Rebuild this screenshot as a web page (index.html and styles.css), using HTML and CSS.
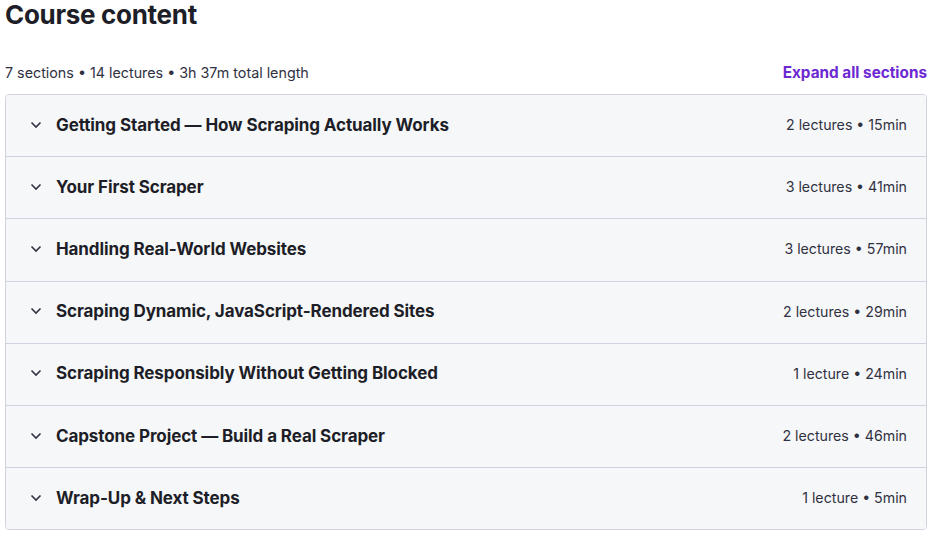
FILE: index.html
```html
<!DOCTYPE html>
<html lang="en">
<head>
  <meta charset="UTF-8" />
  <meta name="viewport" content="width=device-width, initial-scale=1.0" />
  <title>Course content</title>
  <link rel="stylesheet" href="styles.css">
</head>
<body>
  <div class="curriculum">
    <h2 class="heading">Course content</h2>
    <div class="summary">
      <span class="stats">7 sections • 14 lectures • 3h 37m total length</span>
      <button class="expand-all">Expand all sections</button>
    </div>
    <div class="sections">
      <div class="section">
        <svg class="chevron" width="12" height="8" viewBox="0 0 12 8"><path d="M1.5 1.5 L6 6 L10.5 1.5" fill="none" stroke="currentColor" stroke-width="1.6"/></svg>
        <span class="section-title">Getting Started — How Scraping Actually Works</span>
        <span class="section-meta">2 lectures • 15min</span>
      </div>
      <div class="section">
        <svg class="chevron" width="12" height="8" viewBox="0 0 12 8"><path d="M1.5 1.5 L6 6 L10.5 1.5" fill="none" stroke="currentColor" stroke-width="1.6"/></svg>
        <span class="section-title">Your First Scraper</span>
        <span class="section-meta">3 lectures • 41min</span>
      </div>
      <div class="section">
        <svg class="chevron" width="12" height="8" viewBox="0 0 12 8"><path d="M1.5 1.5 L6 6 L10.5 1.5" fill="none" stroke="currentColor" stroke-width="1.6"/></svg>
        <span class="section-title">Handling Real-World Websites</span>
        <span class="section-meta">3 lectures • 57min</span>
      </div>
      <div class="section">
        <svg class="chevron" width="12" height="8" viewBox="0 0 12 8"><path d="M1.5 1.5 L6 6 L10.5 1.5" fill="none" stroke="currentColor" stroke-width="1.6"/></svg>
        <span class="section-title">Scraping Dynamic, JavaScript-Rendered Sites</span>
        <span class="section-meta">2 lectures • 29min</span>
      </div>
      <div class="section">
        <svg class="chevron" width="12" height="8" viewBox="0 0 12 8"><path d="M1.5 1.5 L6 6 L10.5 1.5" fill="none" stroke="currentColor" stroke-width="1.6"/></svg>
        <span class="section-title">Scraping Responsibly Without Getting Blocked</span>
        <span class="section-meta">1 lecture • 24min</span>
      </div>
      <div class="section">
        <svg class="chevron" width="12" height="8" viewBox="0 0 12 8"><path d="M1.5 1.5 L6 6 L10.5 1.5" fill="none" stroke="currentColor" stroke-width="1.6"/></svg>
        <span class="section-title">Capstone Project — Build a Real Scraper</span>
        <span class="section-meta">2 lectures • 46min</span>
      </div>
      <div class="section">
        <svg class="chevron" width="12" height="8" viewBox="0 0 12 8"><path d="M1.5 1.5 L6 6 L10.5 1.5" fill="none" stroke="currentColor" stroke-width="1.6"/></svg>
        <span class="section-title">Wrap-Up &amp; Next Steps</span>
        <span class="section-meta">1 lecture • 5min</span>
      </div>
    </div>
  </div>
</body>
</html>
```

FILE: styles.css
```css
body {
  margin: 0;
  background: #fff;
  color: #303141;
  font-family: Inter, 'Noto Sans', sans-serif;
}
.curriculum {
  padding: 0 6px 0 5px;
}
.heading {
  margin: -1px 0 0;
  font-size: 26px;
  line-height: 31px;
  font-weight: 700;
  color: #1d1e27;
  letter-spacing: -0.3px;
}
.summary {
  display: flex;
  justify-content: space-between;
  align-items: center;
  margin-top: 31px;
  margin-bottom: 11px;
  height: 22px;
}
.stats {
  font-size: 14.3px;
  color: #303141;
}
.expand-all {
  background: none;
  border: none;
  padding: 0;
  font-family: inherit;
  font-size: 15.3px;
  font-weight: 700;
  color: #6d28d2;
  cursor: pointer;
}
.sections {
  border: 1px solid #d1d2e0;
  border-radius: 4px;
  overflow: hidden;
}
.section {
  display: flex;
  align-items: center;
  height: 59.2px;
  padding: 0 19px 2px 24px;
  background: #f6f7f9;
  border-top: 1px solid #d1d2e0;
}
.section:first-child {
  border-top: none;
}
.chevron {
  color: #303141;
  margin-right: 14px;
  flex-shrink: 0;
}
.section-title {
  flex: 1;
  font-size: 17px;
  font-weight: 700;
  color: #1d1e27;
  letter-spacing: -0.1px;
}
.section-meta {
  font-size: 14.2px;
  color: #303141;
}
```
